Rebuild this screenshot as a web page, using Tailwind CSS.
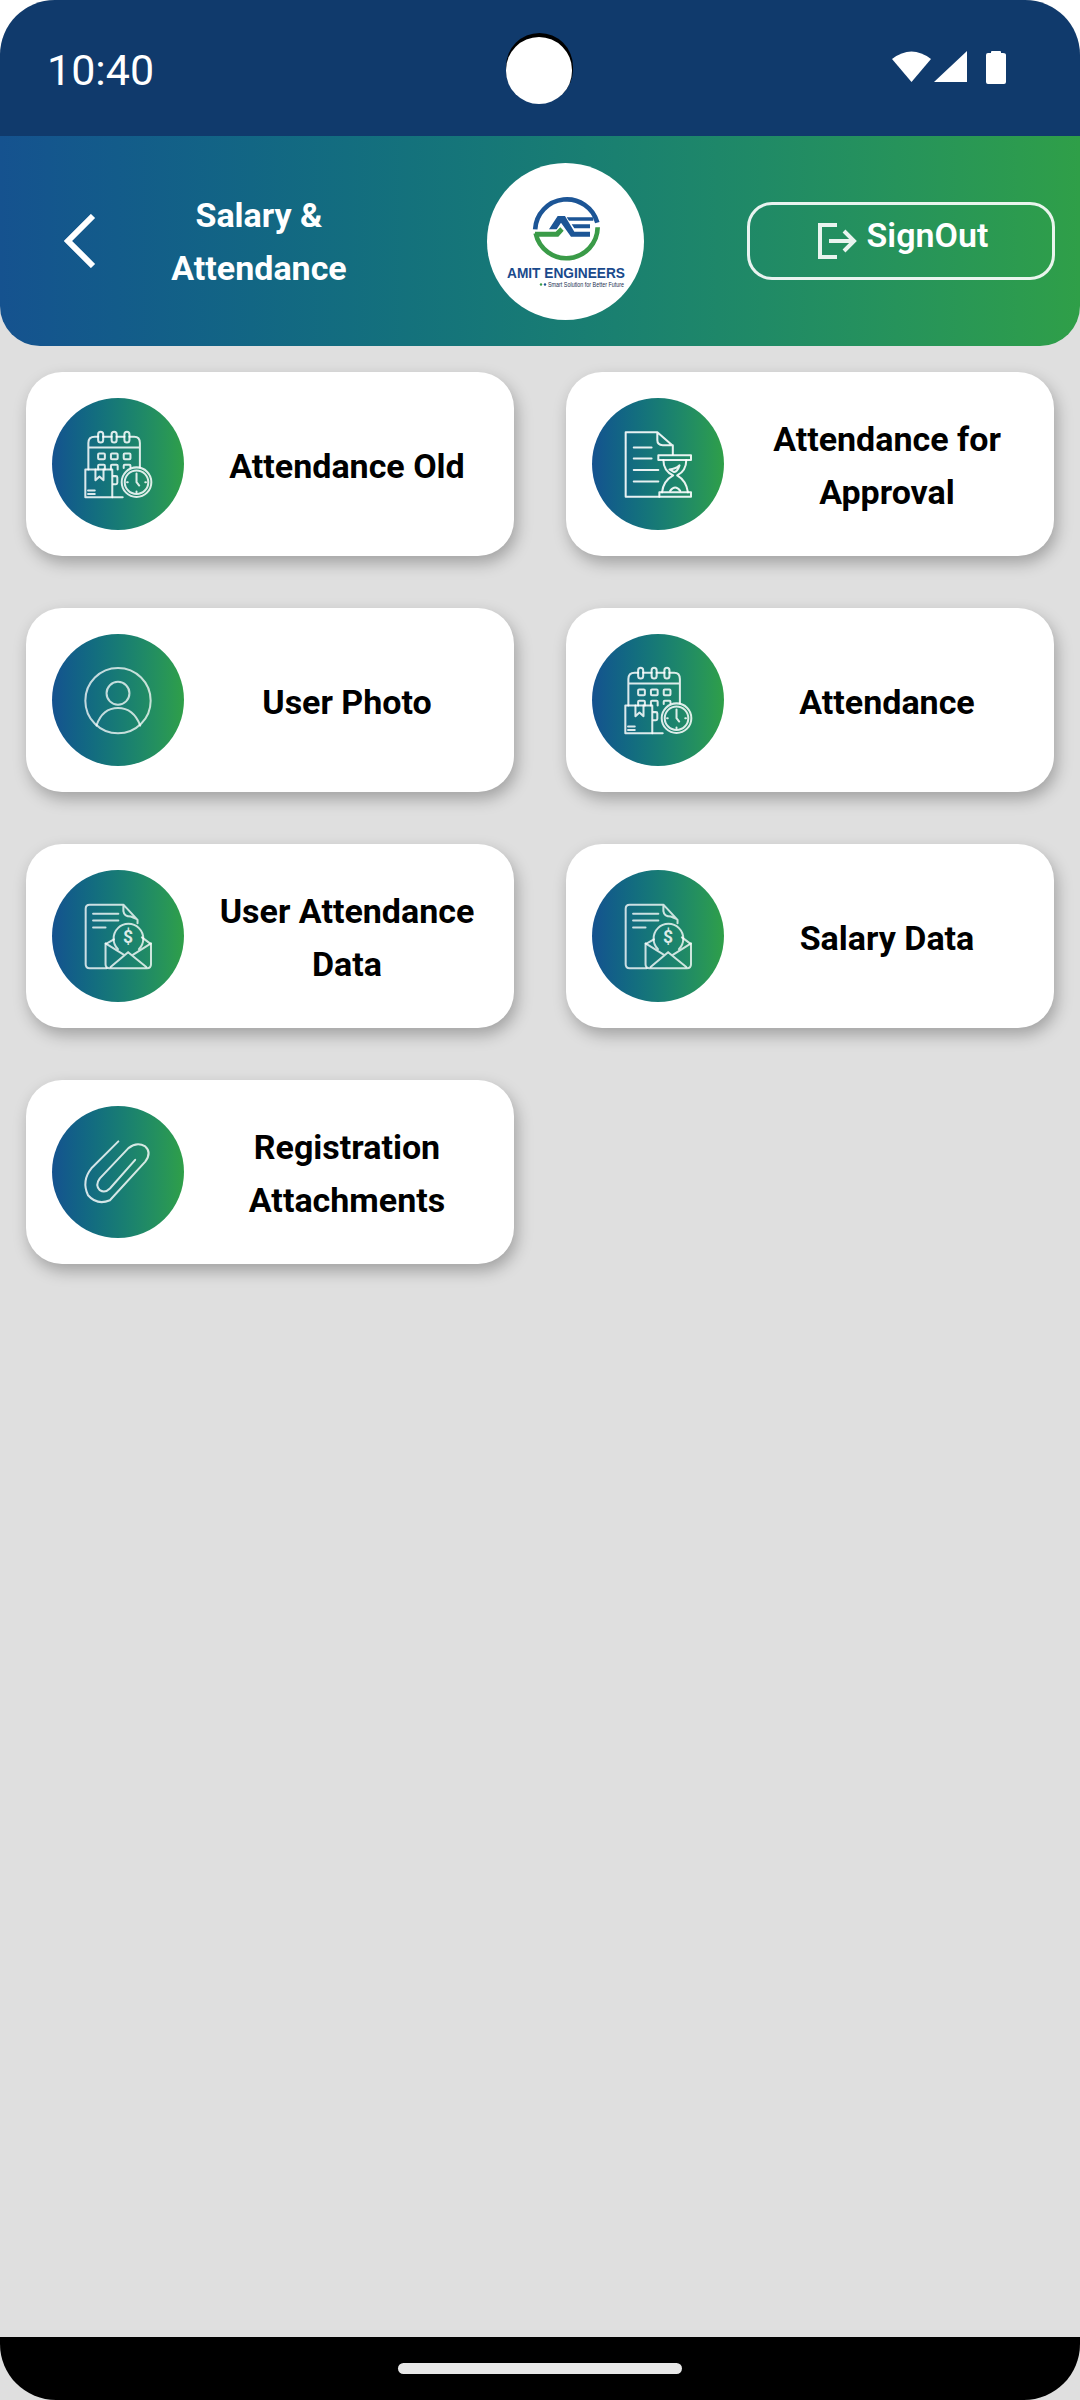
<!DOCTYPE html>
<html lang="en">
<head>
  <meta charset="UTF-8" />
  <meta name="viewport" content="width=device-width, initial-scale=1.0"/>
  <title>Salary &amp; Attendance</title>
  <script src="https://cdn.jsdelivr.net/npm/@tailwindcss/browser@4"></script>
</head>
<body class="bg-white font-['Roboto',sans-serif]">
  <!-- shared icons, drawn in a 392 box -->
  <svg class="hidden">
    <symbol id="ic-calendar" viewBox="38 40 392 392">
      <g fill="none" stroke="#fff" stroke-opacity="0.85" stroke-width="6" stroke-linejoin="round" stroke-linecap="round">
        <path d="M175 155H165Q146 155 146 174V252M190 155H215M230 155H253M268 155H282Q299 155 299 174V246M146 187H299"/>
        <rect x="175" y="140" width="15" height="32" rx="7.5"/>
        <rect x="215" y="140" width="15" height="32" rx="7.5"/>
        <rect x="253" y="140" width="15" height="32" rx="7.5"/>
        <rect x="175" y="205" width="20" height="17" rx="3"/>
        <rect x="213" y="205" width="20" height="17" rx="3"/>
        <rect x="251" y="205" width="20" height="17" rx="3"/>
        <path d="M175 252V241Q175 238 178 238H192Q195 238 195 241V252M213 252V241Q213 238 216 238H230Q233 238 233 241V252M251 248V241Q251 238 254 238H268Q271 238 271 241V246M220 272H228Q232 272 232 276V292Q232 296 228 296H220M217 335H248"/>
        <rect x="137" y="252" width="80" height="83"/>
        <path d="M167 252V284L179 273L191 284V252M145 315H165M145 325H165"/>
        <circle cx="289" cy="290" r="44"/>
        <circle cx="289" cy="290" r="35"/>
        <path d="M289 264V290L297 300M289 318V320M263 290H261M315 290H317"/>
      </g>
    </symbol>
    <symbol id="ic-hourglass" viewBox="38 40 392 392">
      <g fill="none" stroke="#fff" stroke-opacity="0.9" stroke-width="6" stroke-linejoin="round" stroke-linecap="round">
        <path d="M232 142H138V333H238M232 142L278 182V208M232 145V165Q232 180 248 180H278"/>
        <path d="M162 187H215M162 220H215M162 254H235M162 288H235"/>
        <rect x="235" y="210" width="97" height="14"/>
        <path d="M238 333H332V320H238Z"/>
        <path d="M250 224Q250 256 279 270Q250 286 246 320M318 224Q318 256 291 270Q318 286 323 320"/>
        <path d="M268 252Q285 252 298 240Q292 258 282 260ZM270 316Q285 296 300 316"/>
      </g>
    </symbol>
    <symbol id="ic-user" viewBox="38 40 392 392">
      <g fill="none" stroke="#fff" stroke-opacity="0.75" stroke-width="6" stroke-linecap="round">
        <circle cx="234" cy="238" r="97"/>
        <circle cx="234" cy="216" r="34"/>
        <path d="M170 312Q188 260 234 260Q280 260 300 312"/>
      </g>
    </symbol>
    <symbol id="ic-payslip" viewBox="38 40 392 392">
      <g fill="none" stroke="#fff" stroke-opacity="0.78" stroke-width="6" stroke-linejoin="round" stroke-linecap="round">
        <path d="M200 332H150Q138 332 138 320V155Q138 143 150 143H250L292 188V198M250 146V162Q252 178 272 178L290 186"/>
        <path d="M160 170H235M160 190H235M160 211H197"/>
        <path d="M222 246L197 260V320Q197 332 209 332H320Q332 332 332 320V260L305 240"/>
        <path d="M197 258L252 292M332 258L278 292M212 328L264 284L318 328"/>
        <path d="M234 275A44 44 0 1 1 296 275"/>
      </g>
      <text x="264" y="258" text-anchor="middle" font-family="Roboto" font-weight="700" font-size="52" fill="#fff" fill-opacity="0.85">$</text>
    </symbol>
    <symbol id="ic-clip" viewBox="38 40 392 392">
      <path d="M235 145L155 225Q125 262 145 305Q172 336 210 320L315 205Q335 178 315 160Q290 145 265 165L180 255Q165 275 180 290Q195 300 210 285L285 200" fill="none" stroke="#fff" stroke-opacity="0.82" stroke-width="6" stroke-linecap="round" stroke-linejoin="round"/>
    </symbol>
  </svg>

  <div class="w-[1080px] h-[2400px] flex flex-col bg-[#dfdfdf] relative overflow-hidden rounded-t-[55px]">
    <!-- status bar -->
    <div class="h-[136px] shrink-0 bg-[#103a6c] flex items-center justify-between pl-[47px] pr-[74px] relative">
      <span class="text-white text-[43px] leading-none font-normal mt-[4px]">10:40</span>
      <svg width="114" height="36" viewBox="0 0 114 36" fill="#fff" class="-mt-[2px]">
        <path d="M0 10Q19.5 -5 39 10L19.5 33Z"/>
        <path d="M42 33L75 2V33Z"/>
        <path d="M99 3Q99 2 100 2H108Q109 2 109 3V4H111Q114 4 114 6V33Q114 35 112 35H96Q94 35 94 33V6Q94 4 96 4H99Z"/>
      </svg>
      <div class="absolute left-[506px] top-[33px] w-[67px] h-[70px] bg-black rounded-full"></div>
      <div class="absolute left-[506px] top-[37px] w-[66px] h-[67px] bg-white rounded-full"></div>
    </div>

    <!-- header -->
    <div class="h-[210px] shrink-0 bg-linear-to-r from-[#15528f] to-[#2f9f48] rounded-b-[40px] flex items-center pl-[64px] pr-[25px]">
      <svg width="32" height="54" viewBox="0 0 32 54" fill="none" stroke="#fff" stroke-width="6" class="shrink-0">
        <path d="M29 2L4 27L29 52"/>
      </svg>
      <div class="w-[240px] shrink-0 ml-[43px] pt-[1px] text-center text-white font-bold text-[34px] leading-[53px]">Salary &amp;<br>Attendance</div>
      <div class="w-[157px] h-[157px] rounded-full bg-white shrink-0 ml-[108px] overflow-hidden">
        <svg width="157" height="157" viewBox="487 163 157 157">
          <g transform="translate(525 190) scale(0.3333)">
            <path d="M30.5 118A95 95 0 0 1 217 98" fill="none" stroke="#1c5596" stroke-width="14"/>
            <path d="M218 112A94 94 0 0 1 32 130" fill="none" stroke="#3a9b48" stroke-width="14"/>
            <path d="M72 118L98 78H120L148 125H195V140H138L108 98L95 118Z" fill="#1c5596"/>
            <path d="M125 82H205V92H132ZM140 103H195V115H148Z" fill="#1c5596"/>
            <path d="M30 125H92L106 112L116 122L100 140H30Z" fill="#3a9b48"/>
          </g>
          <text x="507" y="278" font-family="Liberation Sans" font-weight="700" font-size="15.5" textLength="118" lengthAdjust="spacingAndGlyphs" fill="#1a4a8c">AMIT ENGINEERS</text>
          <circle cx="541" cy="284.5" r="1.2" fill="#3a9b48"/>
          <circle cx="545" cy="284.5" r="1.2" fill="#1c5596"/>
          <text x="548" y="286.5" font-family="Liberation Sans" font-size="6.5" textLength="76" lengthAdjust="spacingAndGlyphs" fill="#1a3050">Smart Solution for Better Future</text>
        </svg>
      </div>
      <div class="ml-auto w-[308px] h-[78px] border-[3px] border-white/90 rounded-[25px] flex items-center justify-center gap-[10px] pl-[3px] text-white">
        <svg width="40" height="36" viewBox="0 0 40 36" fill="none" stroke="#fff" stroke-width="4" stroke-opacity="0.9" class="shrink-0">
          <path d="M20 2H3V34H20M12 18H37M27 8L37 18L27 28"/>
        </svg>
        <span class="font-semibold text-[34px] leading-none -mt-[12px]">SignOut</span>
      </div>
    </div>

    <!-- menu -->
    <div class="flex-1 grid grid-cols-2 auto-rows-[184px] gap-x-[52px] gap-y-[52px] px-[26px] pt-[26px]">
      <div class="bg-white rounded-[36px] shadow-[3px_7px_16px_rgba(0,0,0,0.28)] flex items-center pl-[26px]">
        <div class="w-[132px] h-[132px] rounded-full bg-linear-to-r from-[#15528f] to-[#2f9f48] shrink-0"><svg width="132" height="132"><use href="#ic-calendar"/></svg></div>
        <div class="flex-1 text-center pr-[4px] pt-[4px] font-bold text-[34px] leading-[53px] text-black">Attendance Old</div>
      </div>
      <div class="bg-white rounded-[36px] shadow-[3px_7px_16px_rgba(0,0,0,0.28)] flex items-center pl-[26px]">
        <div class="w-[132px] h-[132px] rounded-full bg-linear-to-r from-[#15528f] to-[#2f9f48] shrink-0"><svg width="132" height="132"><use href="#ic-hourglass"/></svg></div>
        <div class="flex-1 text-center pr-[4px] pt-[4px] font-bold text-[34px] leading-[53px] text-black">Attendance for<br>Approval</div>
      </div>
      <div class="bg-white rounded-[36px] shadow-[3px_7px_16px_rgba(0,0,0,0.28)] flex items-center pl-[26px]">
        <div class="w-[132px] h-[132px] rounded-full bg-linear-to-r from-[#15528f] to-[#2f9f48] shrink-0"><svg width="132" height="132"><use href="#ic-user"/></svg></div>
        <div class="flex-1 text-center pr-[4px] pt-[4px] font-bold text-[34px] leading-[53px] text-black">User Photo</div>
      </div>
      <div class="bg-white rounded-[36px] shadow-[3px_7px_16px_rgba(0,0,0,0.28)] flex items-center pl-[26px]">
        <div class="w-[132px] h-[132px] rounded-full bg-linear-to-r from-[#15528f] to-[#2f9f48] shrink-0"><svg width="132" height="132"><use href="#ic-calendar"/></svg></div>
        <div class="flex-1 text-center pr-[4px] pt-[4px] font-bold text-[34px] leading-[53px] text-black">Attendance</div>
      </div>
      <div class="bg-white rounded-[36px] shadow-[3px_7px_16px_rgba(0,0,0,0.28)] flex items-center pl-[26px]">
        <div class="w-[132px] h-[132px] rounded-full bg-linear-to-r from-[#15528f] to-[#2f9f48] shrink-0"><svg width="132" height="132"><use href="#ic-payslip"/></svg></div>
        <div class="flex-1 text-center pr-[4px] pt-[4px] font-bold text-[34px] leading-[53px] text-black">User Attendance<br>Data</div>
      </div>
      <div class="bg-white rounded-[36px] shadow-[3px_7px_16px_rgba(0,0,0,0.28)] flex items-center pl-[26px]">
        <div class="w-[132px] h-[132px] rounded-full bg-linear-to-r from-[#15528f] to-[#2f9f48] shrink-0"><svg width="132" height="132"><use href="#ic-payslip"/></svg></div>
        <div class="flex-1 text-center pr-[4px] pt-[4px] font-bold text-[34px] leading-[53px] text-black">Salary Data</div>
      </div>
      <div class="bg-white rounded-[36px] shadow-[3px_7px_16px_rgba(0,0,0,0.28)] flex items-center pl-[26px]">
        <div class="w-[132px] h-[132px] rounded-full bg-linear-to-r from-[#15528f] to-[#2f9f48] shrink-0"><svg width="132" height="132"><use href="#ic-clip"/></svg></div>
        <div class="flex-1 text-center pr-[4px] pt-[4px] font-bold text-[34px] leading-[53px] text-black">Registration<br>Attachments</div>
      </div>
    </div>

    <!-- nav bar -->
    <div class="h-[63px] shrink-0 bg-black rounded-b-[56px] flex justify-center pt-[26px]">
      <div class="w-[284px] h-[11px] rounded-full bg-[#e8e8e8]"></div>
    </div>
  </div>
</body>
</html>
